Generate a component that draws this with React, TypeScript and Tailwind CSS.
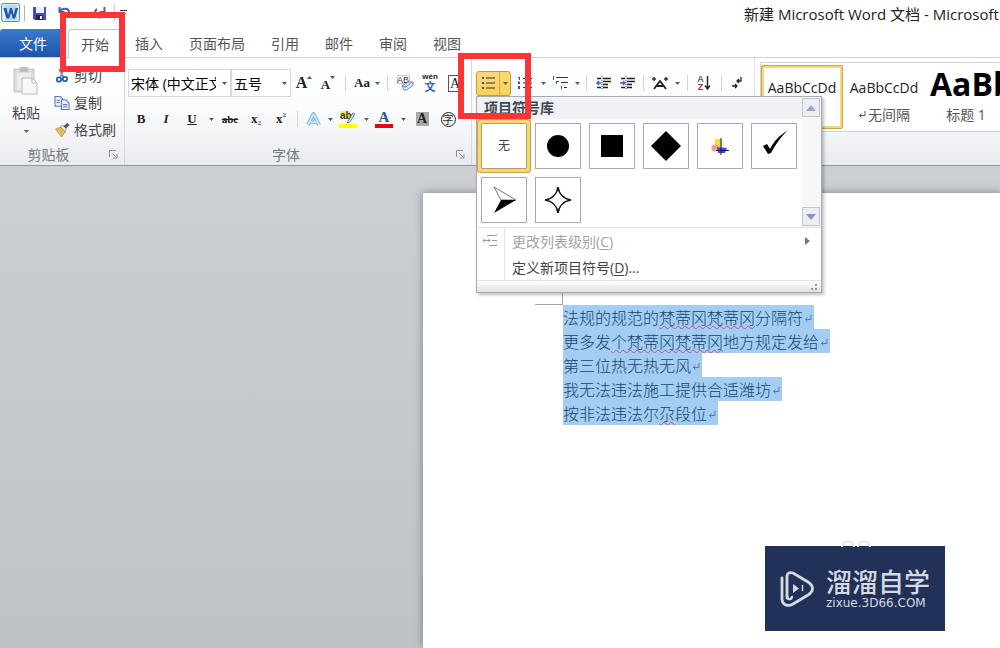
import React from 'react';
import type { ReactNode } from 'react';
import clsx from 'clsx';

const tabs = ['插入', '页面布局', '引用', '邮件', '审阅', '视图'];

type Run = { text: string; wavy?: boolean };

const paragraphs: Run[][] = [
  [{ text: '法规的规范的' }, { text: '梵蒂冈梵蒂冈', wavy: true }, { text: '分隔符' }],
  [{ text: '更多发' }, { text: '个梵蒂冈梵蒂冈', wavy: true }, { text: '地方规定发给' }],
  [{ text: '第三位热无热无风' }],
  [{ text: '我无法违法施工提供合适潍坊' }],
  [{ text: '按非法违法尔' }, { text: '尕', wavy: true }, { text: '段位' }],
];

function Tool({ label, className, children }: { label: string; className: string; children: ReactNode }) {
  return (
    <button aria-label={label} className={clsx('flex h-6 shrink-0 items-center justify-center text-[#222]', className)}>
      {children}
    </button>
  );
}

function Caret({ className }: { className?: string }) {
  return (
    <svg viewBox="0 0 5 3" className={clsx('h-[3px] w-[5px] shrink-0', className)}>
      <path d="M0 0h5L2.5 3z" fill="#5c5c5c" />
    </svg>
  );
}

function Arrow({ label, className }: { label: string; className: string }) {
  return (
    <Tool label={label} className={className}>
      <Caret />
    </Tool>
  );
}

function Sep({ className }: { className: string }) {
  return (
    <div className={clsx('flex shrink-0 justify-center', className)}>
      <div className="h-4 w-px bg-[#d3d6da]" />
    </div>
  );
}

function Launcher({ label }: { label: string }) {
  return (
    <button aria-label={label}>
      <svg viewBox="0 0 9 9" className="h-[9px] w-[9px]" fill="none" stroke="#8b9097">
        <path d="M.5 7V.5H7M3.5 3.5l4 4M8 4v4H4" />
      </svg>
    </button>
  );
}

function Enter({ className }: { className?: string }) {
  return (
    <svg viewBox="0 0 8 8" className={clsx('h-2 w-2', className)} fill="none" stroke="currentColor">
      <path d="M7 0v4.5H1.5M3.5 2.5l-2 2 2 2" />
    </svg>
  );
}

function QuickAccess() {
  return (
    <div className="flex h-[26px] items-center">
      <button aria-label="Word" className="ml-px">
        <svg viewBox="0 0 20 20" className="h-5 w-5">
          <rect x=".5" y=".5" width="18" height="18" rx="2" fill="#dcebf9" stroke="#5b87bd" />
          <path d="M3 2h13v15H5z" fill="#bcd6f1" />
          <path d="M2.5 5h3l1.6 7L9 5h2l1.8 7 1.7-7h2.6l-3 10.500h-2.400L10 9.500l-1.800 6H5.500z" fill="#1c57a5" />
        </svg>
      </button>
      <div className="ml-[3px] h-4 w-px bg-[#b6b6b6]" />
      <button aria-label="保存" className="ml-2">
        <svg viewBox="0 0 13 13" className="h-[13px] w-[13px]">
          <path d="M0 0h13v13H1.500L0 11.500z" fill="#4c4cb8" />
          <path d="M3 0h8v6H3z" fill="#e9edfb" />
          <path d="M3 8h7v5H3z" fill="#23234f" />
          <path d="M7 9h2v3H7z" fill="#fff" />
        </svg>
      </button>
      <button aria-label="撤消" className="ml-3">
        <svg viewBox="0 0 13 12" className="h-3 w-[13px]" fill="none" stroke="#3b62bd" strokeWidth="2">
          <path d="M1.500 0v5h5M2 4.500C4 1 11 .500 11 5.500c0 3-3 5-5 5.500" />
        </svg>
      </button>
      <Caret className="ml-2" />
      <button aria-label="恢复" className="ml-[9px]">
        <svg viewBox="0 0 13 12" className="h-3 w-[13px]" fill="none" stroke="#3b62bd" strokeWidth="2">
          <path d="M11.500 0v5h-5M4 2C1 4 1.500 10 6 10.500c4 0 6-3 4.500-6" />
        </svg>
      </button>
      <div className="ml-2 h-4 w-px bg-[#c8c8c8]" />
      <svg viewBox="0 0 7 6" className="ml-[5px] h-[6px] w-[7px]">
        <path d="M0 0h7v1H0zM1 3h5L3.500 6z" fill="#333" />
      </svg>
    </div>
  );
}

function GroupTitle({ children }: { children: string }) {
  return (
    <div className="flex h-[21px] items-center justify-between pr-[6px] text-[14px] text-[#737a84]">
      <span className="flex-1 pr-3 text-center leading-[20px]">{children}</span>
      <Launcher label={children} />
    </div>
  );
}

function Clipboard() {
  return (
    <section className="flex w-[125px] shrink-0 flex-col border-r border-[#d5d8dc]">
      <div className="flex flex-1 gap-1 pt-1 text-[14px] leading-[27px] text-[#444]">
        <button className="ml-3 flex w-7 flex-col items-center self-start pt-1">
          <svg viewBox="0 0 26 29" className="h-[29px] w-[26px]">
            <path d="M1 3h20v23H1z" fill="#dcdcde" stroke="#c2c2c5" />
            <path d="M7 1h8v5H7z" fill="#bdbdc0" />
            <path d="M4 7h14v17H4z" fill="#ececee" />
            <path d="M9 12h10l5 5v11H9z" fill="#f7f7f8" stroke="#bdbdc1" />
            <path d="M19 12v5h5" fill="none" stroke="#bdbdc1" />
          </svg>
          <span className="mt-1">粘贴</span>
          <Caret className="mt-1" />
        </button>
        <div className="ml-[10px] flex flex-1 flex-col">
          <button className="flex items-center gap-1">
            <svg viewBox="0 0 14 14" className="h-[14px] w-4" fill="none" stroke="#2f62ae" strokeWidth="1.800">
              <path d="M4 0l5 9M9 0L5 9" stroke="#7d92b5" />
              <circle cx="4" cy="10.500" r="2.200" />
              <circle cx="10" cy="10" r="2.200" />
            </svg>
            剪切
          </button>
          <button className="flex items-center gap-1">
            <svg viewBox="0 0 14 13" className="h-[14px] w-4" fill="#e8f0fc" stroke="#5879b9">
              <path d="M.5 .5h5l2 2v7h-7zM2 4h3M2 6h3" />
              <path d="M6.500 3.500h4l3 3v6h-7zM8 8h4M8 10h4" />
            </svg>
            复制
          </button>
          <button className="flex items-center gap-1 whitespace-nowrap">
            <svg viewBox="0 0 15 14" className="h-[14px] w-4">
              <path d="M1 6l5-2 5 5-4 5z" fill="#e5bd54" stroke="#a9832c" strokeWidth=".6" />
              <path d="M6 4l2-2 4 4-1.500 2.500z" fill="#f3efe0" stroke="#77715c" strokeWidth=".7" />
              <path d="M9 3l4-3 2 2-3.500 3.500z" fill="#4b587c" />
            </svg>
            格式刷
          </button>
        </div>
      </div>
      <GroupTitle>剪贴板</GroupTitle>
    </section>
  );
}

function FontGroup() {
  return (
    <section className="flex w-[347px] shrink-0 flex-col border-r border-[#d5d8dc] pl-[3px]">
      <div className="mt-[11px] flex h-7 items-center">
        <div className="relative flex w-[103px] items-center">
          <select aria-label="字体" className="h-7 w-full appearance-none border border-[#d4d7db] bg-white pr-[14px] pl-[2px] text-[14px] text-black">
            <option>宋体 (中文正文)</option>
          </select>
          <Caret className="absolute right-1" />
        </div>
        <div className="relative flex w-[60px] items-center">
          <select aria-label="字号" className="h-7 w-full appearance-none border border-[#d4d7db] bg-white pl-[2px] text-[14px] text-black">
            <option>五号</option>
          </select>
          <Caret className="absolute right-1" />
        </div>
        <Tool label="增大字体" className="w-[26px]">
          <span className="font-['Liberation_Serif'] text-[16px] font-bold">A</span>
          <svg viewBox="0 0 5 3" className="mb-3 h-[3px] w-[5px]"><path d="M0 3h5L2.500 0z" fill="#2d5c9c" /></svg>
        </Tool>
        <Tool label="缩小字体" className="w-[22px]">
          <span className="pt-1 font-['Liberation_Serif'] text-[13px] font-bold">A</span>
          <svg viewBox="0 0 5 3" className="mb-3 h-[3px] w-[5px]"><path d="M0 0h5L2.500 3z" fill="#2d5c9c" /></svg>
        </Tool>
        <Sep className="w-3" />
        <Tool label="更改大小写" className="w-[22px]">
          <span className="font-['Liberation_Serif'] text-[13px] font-bold">Aa</span>
        </Tool>
        <Arrow label="更改大小写选项" className="w-2" />
        <Sep className="w-3" />
        <Tool label="清除格式" className="w-6">
          <svg viewBox="0 0 17 16" className="h-4 w-[17px]">
            <path d="M.5 .5h12v8H.5z" fill="#fff" stroke="#9aa7c4" strokeWidth=".6" />
            <text x="0" y="8" fontSize="9" fontFamily="Liberation Sans" fill="#333">AB</text>
            <path d="M5 11l6-4 5 0v3l-6 5H7z" fill="#dfe6f6" stroke="#7187b8" />
            <path d="M5 11l4 1 6-5" fill="none" stroke="#7187b8" />
          </svg>
        </Tool>
        <Tool label="拼音指南" className="w-[26px]">
          <span className="flex flex-col items-center">
            <span className="font-['Liberation_Sans'] text-[8px] leading-[8px] font-bold">wén</span>
            <span className="text-[11px] leading-[12px] font-bold text-[#3f62b8]">文</span>
          </span>
        </Tool>
        <Tool label="字符边框" className="w-6">
          <span className="h-[17px] w-[15px] border border-[#555] font-['Liberation_Serif'] text-[14px] leading-[15px]">A</span>
        </Tool>
      </div>
      <div className="mt-[10px] flex h-6 items-center font-['Liberation_Serif'] text-[13px] font-bold">
        <Tool label="加粗" className="w-[26px]">B</Tool>
        <Tool label="倾斜" className="w-6"><i>I</i></Tool>
        <Tool label="下划线" className="w-7"><u>U</u></Tool>
        <Arrow label="下划线选项" className="w-[10px]" />
        <Tool label="删除线" className="w-7"><s className="text-[11px]">abc</s></Tool>
        <Tool label="下标" className="w-6">x<span className="pt-2 text-[7px] text-[#2d5c9c]">2</span></Tool>
        <Tool label="上标" className="w-[26px]">x<span className="pb-2 text-[7px] text-[#2d5c9c]">2</span></Tool>
        <Sep className="w-[6px]" />
        <Tool label="文本效果" className="w-[26px]">
          <svg viewBox="0 0 15 15" className="h-[15px] w-[15px]" fill="none">
            <path d="M2 13L7.500 2 13 13M4.500 10h6" stroke="#8fc0ea" strokeWidth="4" strokeLinejoin="round" />
            <path d="M2 13L7.500 2 13 13M4.500 10h6" stroke="#fff" />
          </svg>
        </Tool>
        <Arrow label="文本效果选项" className="w-2" />
        <Tool label="突出显示" className="w-7">
          <svg viewBox="0 0 18 18" className="h-[18px] w-[18px]">
            <path d="M1 1h10v8H1z" fill="#f5ef6b" />
            <text x="1" y="9" fontSize="10" fontWeight="bold" fontFamily="Liberation Sans" fill="#333">ab</text>
            <path d="M9 11l5-8 2 1-5 8-3 1z" fill="#d4dcec" stroke="#50628c" strokeWidth=".8" />
            <path d="M0 14h18v4H0z" fill="#ffff00" />
          </svg>
        </Tool>
        <Arrow label="突出显示选项" className="w-2" />
        <Tool label="字体颜色" className="w-7">
          <span className="w-[18px] border-b-4 border-[#e60012] text-center text-[15px] leading-[14px] text-[#2f5597]">A</span>
        </Tool>
        <Arrow label="字体颜色选项" className="w-[10px]" />
        <Tool label="字符底纹" className="w-7">
          <span className="h-[14px] w-[13px] bg-[#a9a9a9] text-[14px] leading-[14px]">A</span>
        </Tool>
        <Tool label="带圈字符" className="w-6">
          <span className="flex h-[15px] w-[15px] items-center justify-center rounded-full border border-[#222] font-['Noto_Sans_CJK_SC'] text-[11px] leading-[11px] font-normal">字</span>
        </Tool>
      </div>
      <div className="mt-auto"><GroupTitle>字体</GroupTitle></div>
    </section>
  );
}

function Indent({ flip }: { flip?: boolean }) {
  return (
    <svg viewBox="0 0 15 14" className="h-[14px] w-[15px]" fill="none">
      <path d="M1 2.500h4M7 2.500h8M7 5.500h8M7 8.500h5M1 11.500h4M7 11.500h5" stroke="#222" strokeWidth="1.500" />
      <path d="M6 0v14" stroke="#444" strokeDasharray="1 1" />
      <path d={flip ? 'M0 7h4M3 5l2 2-2 2' : 'M1 7h4M3 5L1 7l2 2'} stroke="#3b62bd" strokeWidth="1.400" />
    </svg>
  );
}

function ParagraphGroup() {
  return (
    <section className="relative w-[283px] shrink-0 border-r border-[#dfe2e6] pt-3 pl-1">
      <div className="flex h-[26px] items-center">
        <div className="flex h-[25px] w-[35px] shrink-0 items-center rounded-[3px] border border-[#c49a3c] bg-gradient-to-b from-[#fbd875] to-[#f9d35c]">
          <button aria-label="项目符号" className="flex h-full w-[23px] items-center justify-center border-r border-[#d3a849]">
            <svg viewBox="0 0 13 12" className="h-3 w-[13px]">
              <path d="M0 0h2v2H0zM0 5h2v2H0zM0 10h2v2H0z" fill="#3355a5" />
              <path d="M4 .5h9v1H4zM4 5.500h9v1H4zM4 10.500h9v1H4z" fill="#333" />
            </svg>
          </button>
          <Arrow label="项目符号选项" className="w-[10px]" />
        </div>
        <Tool label="编号" className="w-7">
          <svg viewBox="0 0 14 14" className="h-[14px] w-[14px]">
            <path d="M0 1h2v3H1V2H0zM0 5.500h2V8H0zM0 10h2v3H0z" fill="#3355a5" />
            <path d="M5 2h9v1H5zM5 6.500h9v1H5zM5 11h9v1H5z" fill="#333" />
          </svg>
        </Tool>
        <Arrow label="编号选项" className="w-2" />
        <Tool label="多级列表" className="w-[26px]">
          <svg viewBox="0 0 16 14" className="h-[14px] w-4">
            <path d="M1 0h1v4H1zM4 5h3v1H5v2H4zM9 10h1v3H9z" fill="#3355a5" />
            <path d="M4 1h12v1H4zM9 6h7v1H9zM12 11h3v1h-3z" fill="#333" />
          </svg>
        </Tool>
        <Arrow label="多级列表选项" className="w-2" />
        <Sep className="w-[10px]" />
        <Tool label="减少缩进量" className="w-6"><Indent /></Tool>
        <Tool label="增加缩进量" className="w-6"><Indent flip /></Tool>
        <Sep className="w-2" />
        <Tool label="中文版式" className="w-[26px]">
          <svg viewBox="0 0 16 13" className="h-[13px] w-4" fill="none">
            <path d="M2 12l6-8 6 8M5 9h6" stroke="#222" strokeWidth="1.800" />
            <path d="M0 2h4M2 0v4M12 2h4M14 0v4" stroke="#28288c" strokeWidth="1.400" />
          </svg>
        </Tool>
        <Arrow label="中文版式选项" className="w-2" />
        <Sep className="w-3" />
        <Tool label="排序" className="w-[22px]">
          <span className="flex flex-col font-['Liberation_Sans'] text-[9px] leading-[8px] font-bold">
            <span className="text-[#3b62bd]">A</span>
            <span className="text-[#a8324a]">Z</span>
          </span>
          <svg viewBox="0 0 7 14" className="h-[14px] w-[7px]" fill="none" stroke="#222">
            <path d="M3.500 0v13M1 9.500l2.500 3.500L6 9.500" strokeWidth="1.400" />
          </svg>
        </Tool>
        <Sep className="w-3" />
        <Tool label="显示编辑标记" className="w-5">
          <svg viewBox="0 0 10 12" className="h-3 w-[10px]" fill="none" stroke="#222" strokeWidth="1.300">
            <path d="M9 0v4H5M7 2L5 4l2 2M0 9h5M3 7l2 2-2 2" />
          </svg>
        </Tool>
      </div>
      <BulletMenu />
      <div className="pointer-events-none absolute -top-[5px] -left-[14px] z-20 h-[66px] w-[73px] border-[6px] border-[#fb3438]" />
    </section>
  );
}

const bullets: { name: string; icon: ReactNode }[] = [
  { name: '圆', icon: <circle cx="22" cy="22" r="11" /> },
  { name: '方块', icon: <path d="M11 11h22v22H11z" /> },
  { name: '菱形', icon: <path d="M22 7l15 15-15 15L7 22z" /> },
  {
    name: '彩色',
    icon: (
      <>
        <path d="M17 15h7v8h-7z" fill="#ffd83a" />
        <circle cx="17" cy="24" r="3.500" fill="#f79a9a" />
        <path d="M19 23l10 1-2 5h-7z" fill="#4a4ad8" />
        <path d="M23 14v17M18 26.500h13" stroke="#16164a" />
      </>
    ),
  },
  { name: '对勾', icon: <path d="M11 22l4-2 3 5C22 17 28 11 35 7c-7 7-12 14-16 22l-3 1z" /> },
  {
    name: '箭头',
    icon: (
      <>
        <path d="M12 9l22 13H19z" fill="#fff" stroke="#555" strokeWidth=".8" />
        <path d="M19 22h15L12 35z" />
      </>
    ),
  },
  { name: '四角星', icon: <path d="M22 9c1 7 6 12 13 13-7 1-12 6-13 13-1-7-6-12-13-13 7-1 12-6 13-13z" fill="none" stroke="#111" strokeWidth="1.600" /> },
];

function BulletMenu() {
  return (
    <div className="absolute top-[38px] left-1 z-10 w-[346px] border border-[#a7abb0] bg-white text-[14px] text-[#444] shadow-[2px_2px_3px_rgba(0,0,0,0.25)]">
      <div className="flex">
        <div className="flex-1">
          <h3 className="h-[22px] bg-[#eff1f5] pl-[7px] text-[14px] leading-[22px] font-bold text-[#3f4650]">项目符号库</h3>
          <div className="grid grid-cols-[repeat(6,46px)] gap-2 pt-1 pb-1 pl-1">
            <button className="h-[46px] rounded-[1px] border border-[#b0a070] bg-white text-[12px] shadow-[0_0_0_3px_#f8d76e,0_0_0_4px_#cfa548]">无</button>
            {bullets.map(b => (
              <button key={b.name} aria-label={b.name} className="h-[46px] border border-[#a9a9a9] bg-white">
                <svg viewBox="0 0 44 44" className="h-11 w-11">{b.icon}</svg>
              </button>
            ))}
          </div>
        </div>
        <div className="flex w-[19px] flex-col justify-between bg-[#f7f7f8] py-px pr-px">
          <button aria-label="向上" className="flex h-[19px] items-center justify-center border border-[#c3c6cb] bg-[#eceef1]">
            <svg viewBox="0 0 10 6" className="h-[6px] w-[10px]"><path d="M0 6h10L5 0z" fill="#9aa5cb" /></svg>
          </button>
          <button aria-label="向下" className="flex h-[19px] items-center justify-center border border-[#c3c6cb] bg-[#eceef1]">
            <svg viewBox="0 0 10 6" className="h-[6px] w-[10px]"><path d="M0 0h10L5 6z" fill="#8694bd" /></svg>
          </button>
        </div>
      </div>
      <div className="flex border-t border-[#e1e3e6]">
        <div className="w-7 border-r border-[#e1e3e6] pt-[7px] pl-[6px]">
          <svg viewBox="0 0 14 12" className="h-3 w-[14px]" fill="none" stroke="#999">
            <path d="M4 .5h10M9 5.500h5M6 10.500h8M0 5.500h7M2 3.500l-2 2 2 2M5 3.500l2 2-2 2" />
          </svg>
        </div>
        <div className="flex flex-1 flex-col">
          <button disabled className="flex h-[26px] items-center justify-between pr-[11px] pl-[7px] text-[#a3a3a3]">
            <span>更改列表级别(<u className="underline-offset-2">C</u>)</span>
            <svg viewBox="0 0 5 8" className="h-2 w-[5px]"><path d="M0 0v8l5-4z" fill="#777" /></svg>
          </button>
          <button className="flex h-[26px] items-center pl-[7px]">
            <span>定义新项目符号(<u className="underline-offset-2">D</u>)...</span>
          </button>
        </div>
      </div>
      <div className="flex h-3 items-center justify-end border-t border-[#e1e3e6] bg-gradient-to-b from-white to-[#dfe1e6] pr-[3px]">
        <svg viewBox="0 0 8 8" className="h-2 w-2" fill="#999"><path d="M5 1h2v2H5zM5 5h2v2H5zM1 5h2v2H1z" /></svg>
      </div>
    </div>
  );
}

function StylesGroup() {
  return (
    <section className="min-w-0 flex-1 pt-1 pl-[5px]">
      <div className="flex h-[70px] overflow-hidden border border-r-0 border-[#d0d3d7] bg-white pt-[2px] text-[14px] text-[#222]">
        <button className="flex h-[64px] w-[82px] shrink-0 justify-center rounded-[2px] border-[3px] border-[#f8d76e] pt-[9px] outline-1 -outline-offset-1 outline-[#cfa548]">
          AaBbCcDd
        </button>
        <button className="flex w-[82px] shrink-0 flex-col items-center pt-3">
          AaBbCcDd
          <span className="mt-[6px] flex items-center gap-[2px] text-[#555]"><Enter />无间隔</span>
        </button>
        <button className="flex w-[82px] shrink-0 flex-col items-center">
          <span className="h-[39px] w-full pl-[5px] text-left text-[32px] leading-[38px] font-bold whitespace-nowrap text-black">AaBb</span>
          <span className="text-[#555]">标题 1</span>
        </button>
      </div>
    </section>
  );
}

function DocumentPage() {
  return (
    <main className="mt-[27px] ml-[423px] flex-1 bg-white pt-[100px] pl-[112px] shadow-[0_0_8px_rgba(70,75,85,0.6)]">
      {/* top-left margin mark */}
      <div className="h-3 w-7 border-r border-b border-[#a5a5a5]" />
      <div className="ml-7 flex flex-col items-start font-['Noto_Sans_CJK_SC',serif] text-[16px] leading-6 font-light text-[#16446c]">
        {paragraphs.map((runs, i) => (
          <p key={i} className="flex items-center bg-[#a3cdf2] pr-[2px] whitespace-nowrap">
            <span>
              {runs.map(run => (
                <span key={run.text} className={clsx(run.wavy && 'underline decoration-[#c0507c] decoration-wavy decoration-1 underline-offset-1')}>
                  {run.text}
                </span>
              ))}
            </span>
            <Enter className="mt-1 ml-px text-[#4f7fa8]" />
          </p>
        ))}
      </div>
    </main>
  );
}

function Watermark() {
  return (
    <aside className="absolute right-[55px] bottom-[17px] flex h-[85px] w-[180px] items-center gap-3 bg-[#223157] pl-[15px] text-[#d5d9e2]">
      <svg viewBox="0 0 30 8" className="absolute -top-[7px] left-[76px] h-2 w-[30px]" fill="none" stroke="#e6e6e6" strokeWidth="2">
        <path d="M1 8a6 6 0 0 1 12 0M17 8a6 6 0 0 1 12 0" />
      </svg>
      <svg viewBox="0 0 34 36" className="h-9 w-[34px] shrink-0" fill="none" stroke="currentColor" strokeLinecap="round">
        <path d="M7 27V5c0-3 3-4 6-3l15 9c6 4 6 9 0 13L13 33c-5 3-11 1-11-5V7" strokeWidth="2.800" />
        <path d="M7 25c0 4 4 4 5 1" strokeWidth="2.400" />
        <path d="M13 13v9l6-4.500z" fill="currentColor" stroke="none" />
        <path d="M22.500 14.500v5" strokeWidth="1.500" />
      </svg>
      <div>
        <p className="text-[26px] leading-[28px] font-medium whitespace-nowrap">溜溜自学</p>
        <p className="font-['DejaVu_Sans'] text-[12px] leading-[14px] whitespace-nowrap">zixue.3D66.COM</p>
      </div>
    </aside>
  );
}

export default function App() {
  return (
    <div className="relative flex min-h-screen flex-col overflow-hidden bg-gradient-to-b from-[#d0d3d8] to-[#bfc3c8] font-['Open_Sans','Noto_Sans_CJK_SC',sans-serif]">
      <header className="bg-white">
        <div className="flex h-[29px] justify-between">
          <QuickAccess />
          <h1 className="w-[256px] overflow-hidden text-[15px] leading-[29px] whitespace-pre text-[#222]">新建 Microsoft Word 文档 - Microsoft Word</h1>
        </div>
        <nav className="flex h-7 text-[14px] text-[#555]">
          <button className="w-[66px] rounded-t-[3px] bg-gradient-to-b from-[#3c7bd0] to-[#1d55a8] text-white">文件</button>
          <div className="relative z-10 ml-[2px]">
            <button className="-mb-px h-[29px] w-[54px] rounded-t-[3px] border border-b-0 border-[#c3c7cc] bg-white">开始</button>
            <div className="pointer-events-none absolute -top-[17px] -left-2 z-20 h-[60px] w-[65px] border-[6px] border-[#fb3438]" />
          </div>
          {tabs.map(t => (
            <button key={t} className="px-[13px]">{t}</button>
          ))}
        </nav>
        <div className="flex h-[109px] border-t border-b border-t-[#cdd0d4] border-b-[#90959d] bg-gradient-to-b from-white via-[#fafbfc] to-[#e8ebef]">
          <Clipboard />
          <FontGroup />
          <ParagraphGroup />
          <StylesGroup />
        </div>
      </header>
      <DocumentPage />
      <Watermark />
    </div>
  );
}
